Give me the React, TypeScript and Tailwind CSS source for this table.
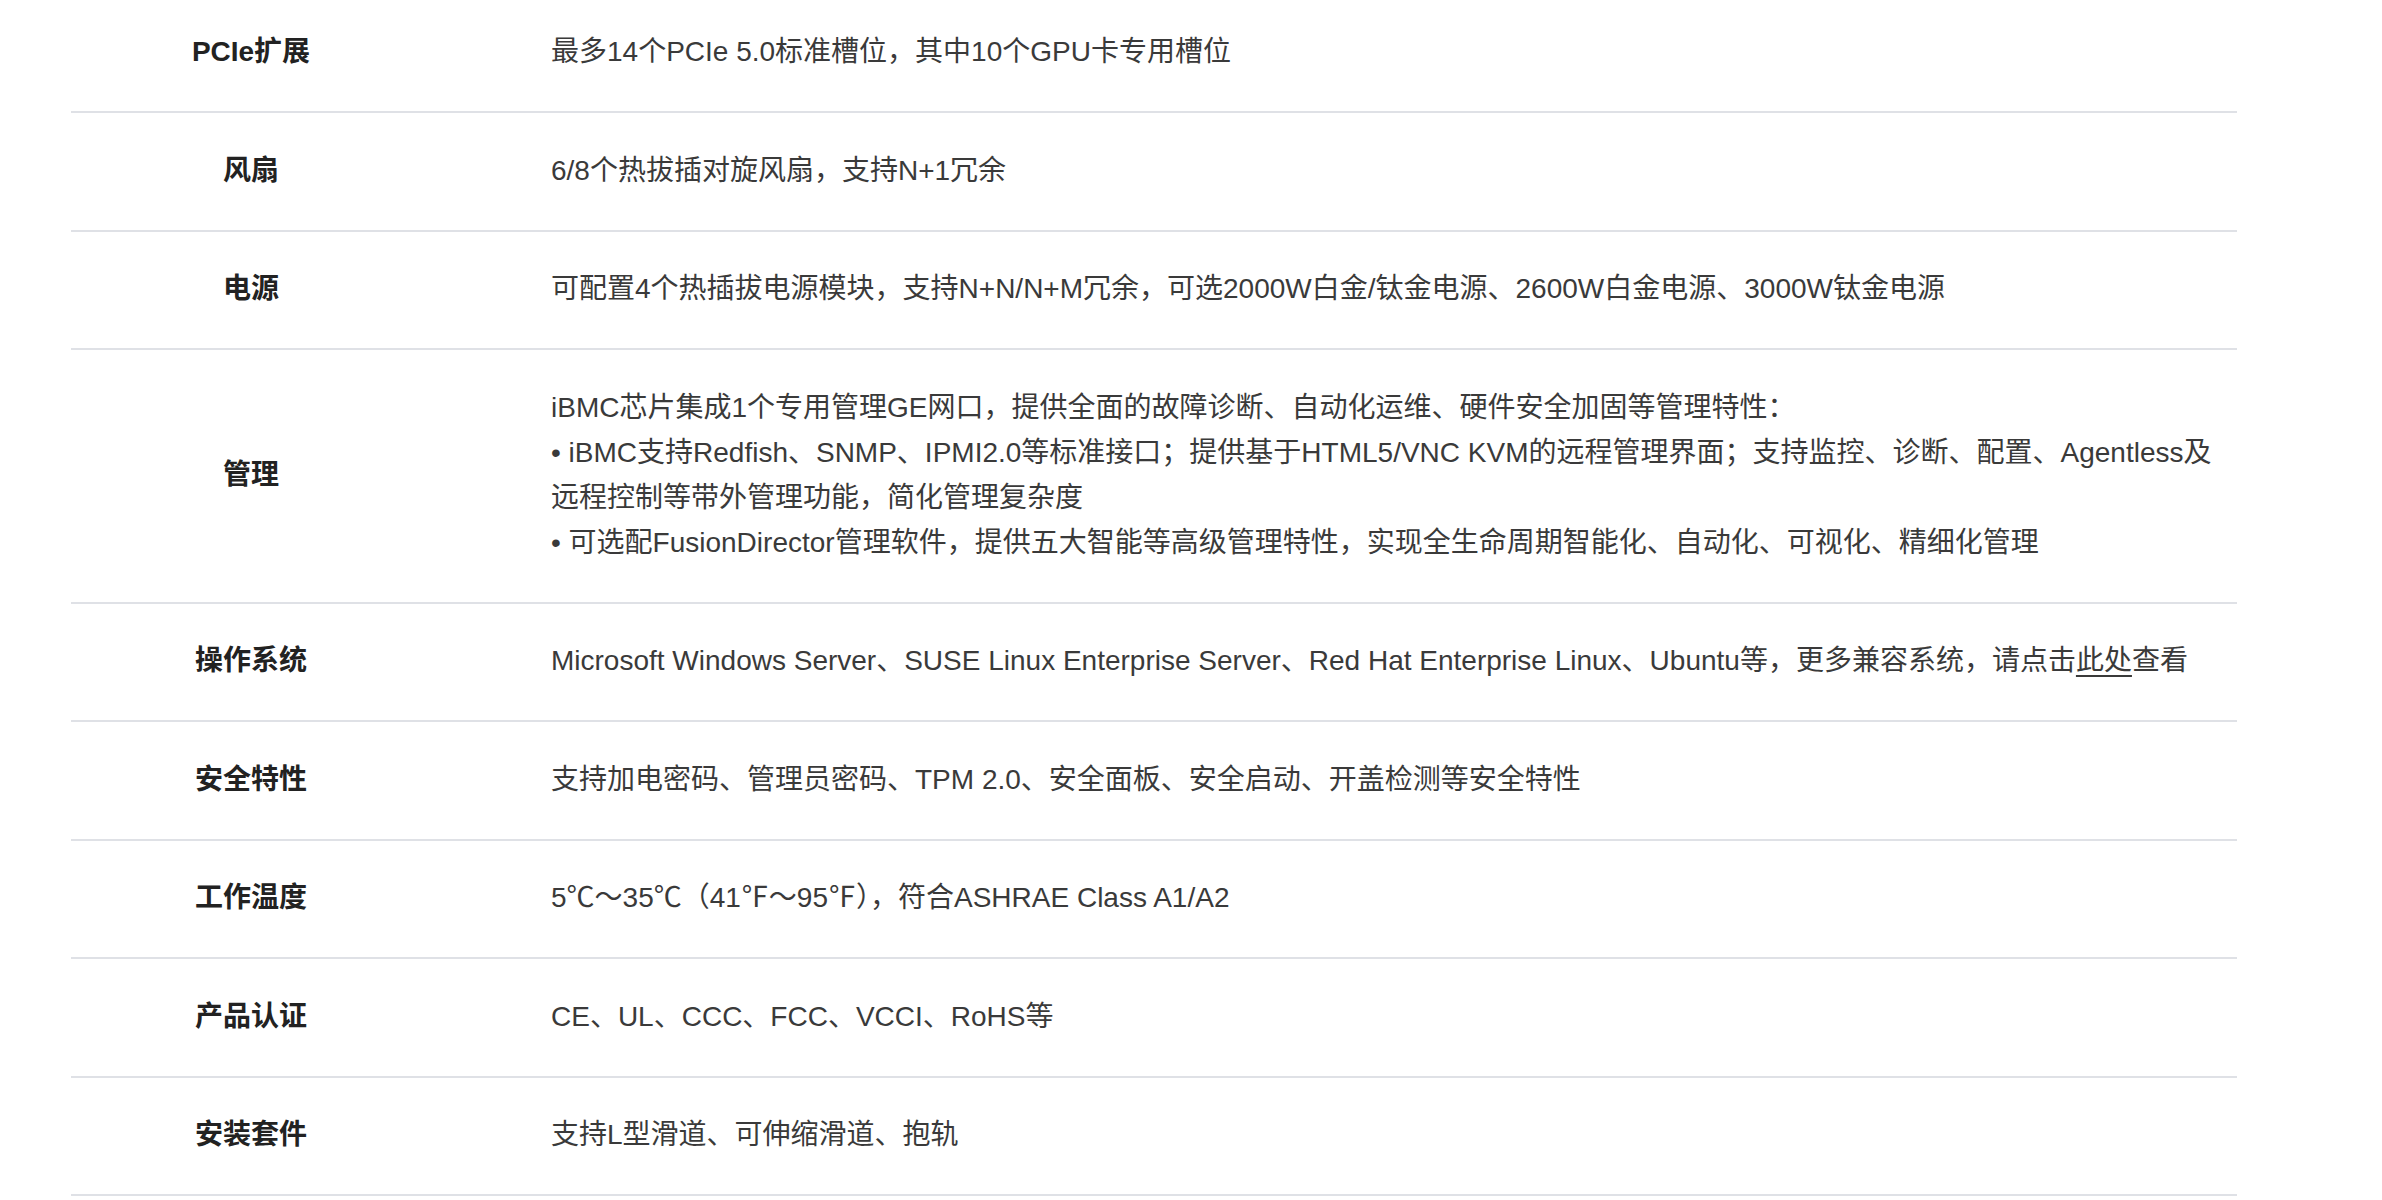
import React from "react";

type Row = { label: string; lines: React.ReactNode[] };

const rows: Row[] = [
  { label: "PCIe扩展", lines: ["最多14个PCIe 5.0标准槽位，其中10个GPU卡专用槽位"] },
  { label: "风扇", lines: ["6/8个热拔插对旋风扇，支持N+1冗余"] },
  {
    label: "电源",
    lines: ["可配置4个热插拔电源模块，支持N+N/N+M冗余，可选2000W白金/钛金电源、2600W白金电源、3000W钛金电源"],
  },
  {
    label: "管理",
    lines: [
      "iBMC芯片集成1个专用管理GE网口，提供全面的故障诊断、自动化运维、硬件安全加固等管理特性：",
      "• iBMC支持Redfish、SNMP、IPMI2.0等标准接口；提供基于HTML5/VNC KVM的远程管理界面；支持监控、诊断、配置、Agentless及",
      "远程控制等带外管理功能，简化管理复杂度",
      "• 可选配FusionDirector管理软件，提供五大智能等高级管理特性，实现全生命周期智能化、自动化、可视化、精细化管理",
    ],
  },
  {
    label: "操作系统",
    lines: [
      <>
        Microsoft Windows Server、SUSE Linux Enterprise Server、Red Hat Enterprise Linux、Ubuntu等，更多兼容系统，请点击
        <span className="underline underline-offset-[5px] decoration-[2px]">此处</span>查看
      </>,
    ],
  },
  { label: "安全特性", lines: ["支持加电密码、管理员密码、TPM 2.0、安全面板、安全启动、开盖检测等安全特性"] },
  { label: "工作温度", lines: ["5℃～35℃（41℉～95℉），符合ASHRAE Class A1/A2"] },
  { label: "产品认证", lines: ["CE、UL、CCC、FCC、VCCI、RoHS等"] },
  { label: "安装套件", lines: ["支持L型滑道、可伸缩滑道、抱轨"] },
];

export default function App() {
  return (
    <div
      className="w-[2382px] h-[1200px] overflow-hidden bg-white"
      style={{ fontFamily: '"Liberation Sans", "Noto Sans CJK SC", sans-serif' }}
    >
      <div className="mt-[-5.5px] ml-[71px] w-[2166px] flex flex-col">
        {rows.map((r, i) => (
          <div key={i} className="flex items-center border-b-2 border-[#dfe1e6] pt-[34.5px] pb-[37px]">
            <div className="w-[360px] shrink-0 text-center text-[28px] leading-[45px] font-bold text-[#222222]">
              {r.label}
            </div>
            <div className="pl-[120px] flex-1 text-[28px] leading-[45px] text-[#3a3a3a] whitespace-nowrap">
              {r.lines.map((l, j) => (
                <div key={j}>{l}</div>
              ))}
            </div>
          </div>
        ))}
      </div>
    </div>
  );
}
